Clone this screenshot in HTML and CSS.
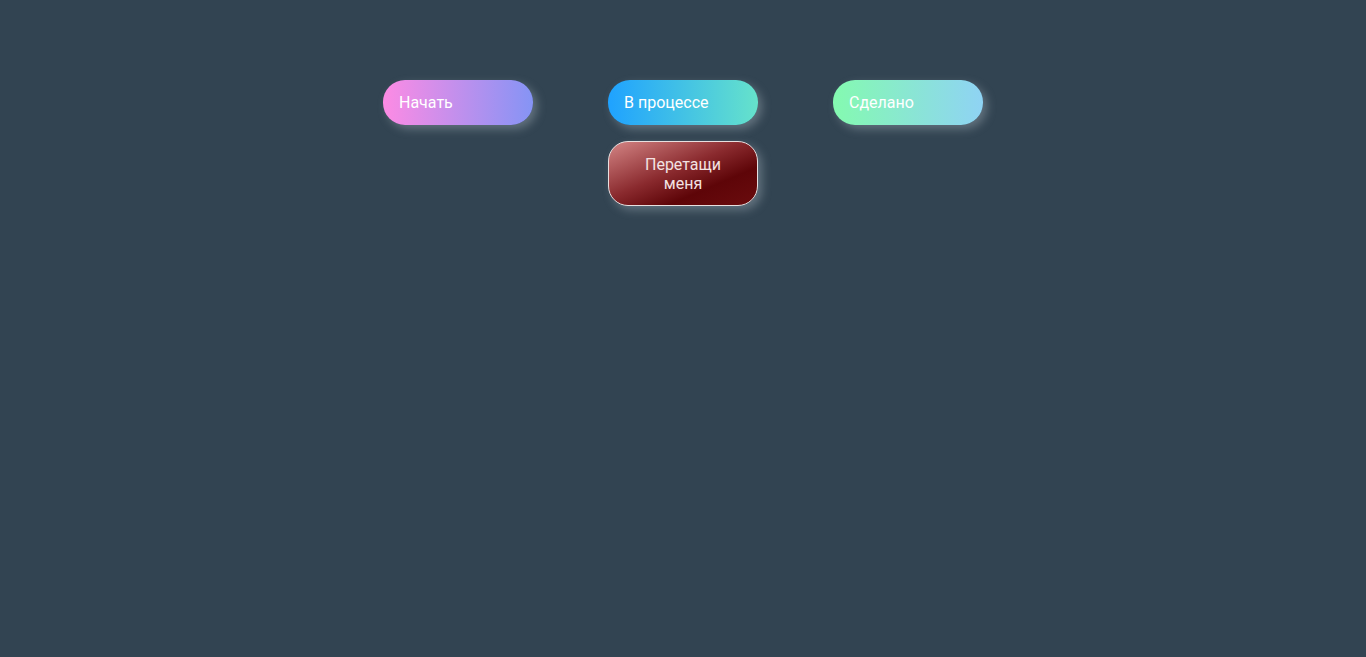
FILE: index.html
```html
<!DOCTYPE html>
<html lang="ru">
<head>
<meta charset="utf-8">
<title>Доска</title>
<link rel="stylesheet" href="styles.css">
</head>
<body>
<main class="board">
  <section class="column">
    <div class="col-head head-start">Начать</div>
  </section>
  <section class="column">
    <div class="col-head head-progress">В процессе</div>
    <div class="card" draggable="true">Перетащи меня</div>
  </section>
  <section class="column">
    <div class="col-head head-done">Сделано</div>
  </section>
</main>
</body>
</html>
```

FILE: styles.css
```css
html, body {
  margin: 0;
  padding: 0;
  height: 100%;
  background: #324452;
  font-family: Roboto, "Liberation Sans", sans-serif;
}

.board {
  display: flex;
  justify-content: center;
  gap: 75px;
  padding-top: 80px;
}

.column {
  width: 150px;
  display: flex;
  flex-direction: column;
  gap: 16px;
}

.col-head {
  height: 45px;
  box-sizing: border-box;
  padding-left: 16px;
  display: flex;
  align-items: center;
  border-radius: 22px;
  color: #ffffff;
  font-size: 16px;
  box-shadow: 4px 4px 10px rgba(190, 200, 210, 0.35);
}

.head-start { background: linear-gradient(to right, #fd8be4, #8594f5); }
.head-progress { background: linear-gradient(to right, #1fa2ff, #66e2cb); }
.head-done { background: linear-gradient(to right, #84fab0, #8fd3f4); }

.card {
  height: 65px;
  box-sizing: border-box;
  border: 1px solid #e8e0e0;
  border-radius: 20px;
  display: flex;
  align-items: center;
  justify-content: center;
  text-align: center;
  padding: 0 32px;
  font-size: 16px;
  line-height: 19px;
  color: #f3e2e2;
  background: linear-gradient(to bottom right, #d48585 0%, #8a2a2e 45%, #5e0508 70%, #6a0c0e 100%);
  box-shadow: 4px 4px 10px rgba(190, 200, 210, 0.35);
  cursor: grab;
}
```
